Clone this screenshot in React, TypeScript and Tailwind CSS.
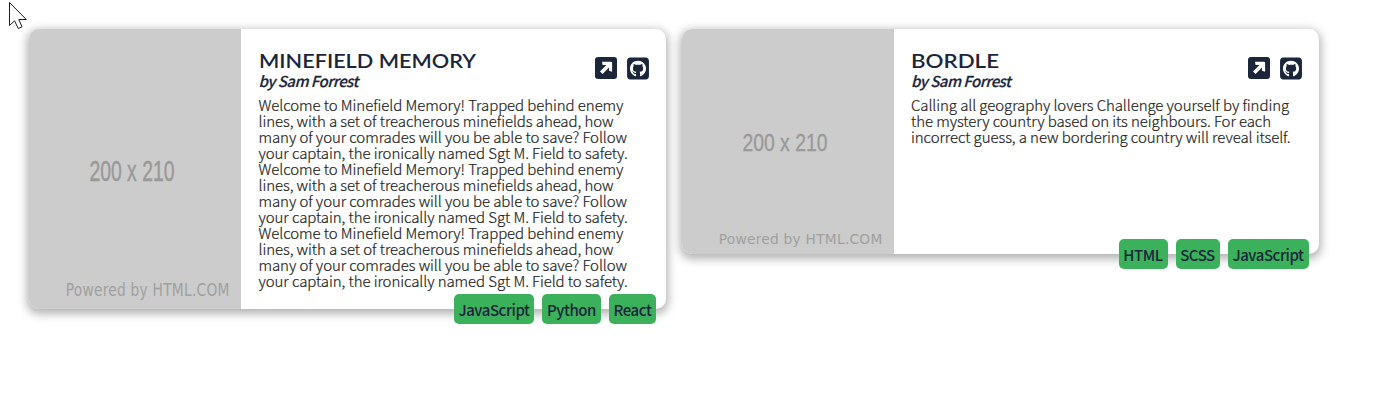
import type { ReactNode } from "react";
import { FaSquareGithub } from "react-icons/fa6";

type Project = {
  title: string;
  titleClass: string;
  author: string;
  lines: string[];
  tags: { name: string; width: string }[];
};

const minefieldLines = [
  "Welcome to Minefield Memory! Trapped behind enemy",
  "lines, with a set of treacherous minefields ahead, how",
  "many of your comrades will you be able to save? Follow",
  "your captain, the ironically named Sgt M. Field to safety.",
];

const projects: Project[] = [
  {
    title: "MINEFIELD MEMORY",
    titleClass: "scale-x-[1.083]",
    author: "Sam Forrest",
    lines: [...minefieldLines, ...minefieldLines, ...minefieldLines],
    tags: [
      { name: "JavaScript", width: "w-20" },
      { name: "Python", width: "w-[59px]" },
      { name: "React", width: "w-[47px]" },
    ],
  },
  {
    title: "BORDLE",
    titleClass: "scale-x-[1.115]",
    author: "Sam Forrest",
    lines: [
      "Calling all geography lovers Challenge yourself by finding",
      "the mystery country based on its neighbours. For each",
      "incorrect guess, a new bordering country will reveal itself.",
    ],
    tags: [
      { name: "HTML", width: "w-[49px]" },
      { name: "SCSS", width: "w-11" },
      { name: "JavaScript", width: "w-[81px]" },
    ],
  },
];

function Placeholder({ height }: { height: number }) {
  return (
    <svg
      className="block w-full rounded-l-[10px]"
      height={height}
      viewBox="0 0 200 210"
      preserveAspectRatio="none"
      role="img"
    >
      <rect width="200" height="210" fill="#ccc" />
      <text x="57" y="114.3" fontSize="22" textLength="80.3" lengthAdjust="spacingAndGlyphs" fill="#999" className="font-['Liberation_Sans']" stroke="#999" strokeWidth="0.3">
        200 x 210
      </text>
      <text x="34.7" y="200.5" fontSize="13" textLength="154.3" lengthAdjust="spacing" fill="#a0a0a0" className="font-['DejaVu_Sans']">
        Powered by HTML.COM
      </text>
    </svg>
  );
}

function ArrowSquare() {
  return (
    <svg className="mt-px h-[22px] w-[22px]" viewBox="0 0 22 22">
      <rect width="22" height="22" rx="3" fill="currentColor" />
      <path d="M7 4.8H16Q17.1 4.8 17.1 5.9V14.8L14 13.8V10.5L7.6 17L5 14.4L11.4 7.9H7.6Z" fill="#fff" />
    </svg>
  );
}

function IconLink({ label, children }: { label: string; children: ReactNode }) {
  return (
    <a href="#" aria-label={label} className="block text-[#1b263b]">
      {children}
    </a>
  );
}

function Card({ project, height, className }: { project: Project; height: number; className: string }) {
  return (
    <article className={`relative flex rounded-[10px] bg-white shadow-[0_3px_10px_2px_rgba(0,0,0,0.3)] ${className}`}>
      <div className="w-[212px] shrink-0">
        <Placeholder height={height} />
      </div>
      <div className="flex min-w-0 flex-1 flex-col pl-[17.5px] pr-[17px] pt-[21px]">
        <header className="flex h-[47px] justify-between">
          <div>
            <h2 className={`h-5 origin-left whitespace-nowrap font-['Lato',sans-serif] text-[20px] font-semibold leading-5 text-[#1b263b] ${project.titleClass}`}>
              {project.title}
            </h2>
            <p className="h-[22px] whitespace-nowrap text-[15px] font-medium italic leading-[22px] tracking-[-0.55px] text-[#1b263b] [-webkit-text-stroke:0.2px_#1b263b]">
              by {project.author}
            </p>
          </div>
          <div className="flex gap-[10px] pt-[6px]">
            <IconLink label="Open project">
              <ArrowSquare />
            </IconLink>
            <IconLink label="Source code">
              <FaSquareGithub className="h-[25px] w-[22px]" />
            </IconLink>
          </div>
        </header>
        <p className="text-[15px] font-light leading-4 tracking-[-0.08px] text-[#222] [-webkit-text-stroke:0.2px_#222]">
          {project.lines.map((line, i) => (
            <span key={i} className="block h-4 whitespace-nowrap">
              {line}
            </span>
          ))}
        </p>
      </div>
      <ul className="absolute -bottom-[15px] right-[10px] flex gap-2">
        {project.tags.map((tag) => (
          <li
            key={tag.name}
            className={`flex h-[30px] items-center justify-center whitespace-nowrap rounded-[5px] bg-[#3cb15b] pt-[2px] text-[15px] font-medium tracking-[-0.45px] text-[#1b263b] ${tag.width}`}
          >
            {tag.name}
          </li>
        ))}
      </ul>
    </article>
  );
}

export default function App() {
  return (
    <main className="relative flex h-[418px] items-start gap-[15.5px] overflow-hidden bg-white pl-[29px] pt-[29px] font-['Noto_Sans_CJK_SC',sans-serif]">
      <Card project={projects[0]} height={280} className="h-[280px] w-[637px]" />
      <Card project={projects[1]} height={225} className="h-[225px] w-[637px]" />
      <svg className="absolute left-[9px] top-[2px]" width="19" height="28" viewBox="0 0 19 28">
        <path
          d="M.5.5V23.5L5.5 18.8L9.3 26.5L13 24.8L9.8 17.5H17.3Z"
          fill="#fff"
          stroke="#1a1a2a"
        />
      </svg>
    </main>
  );
}
